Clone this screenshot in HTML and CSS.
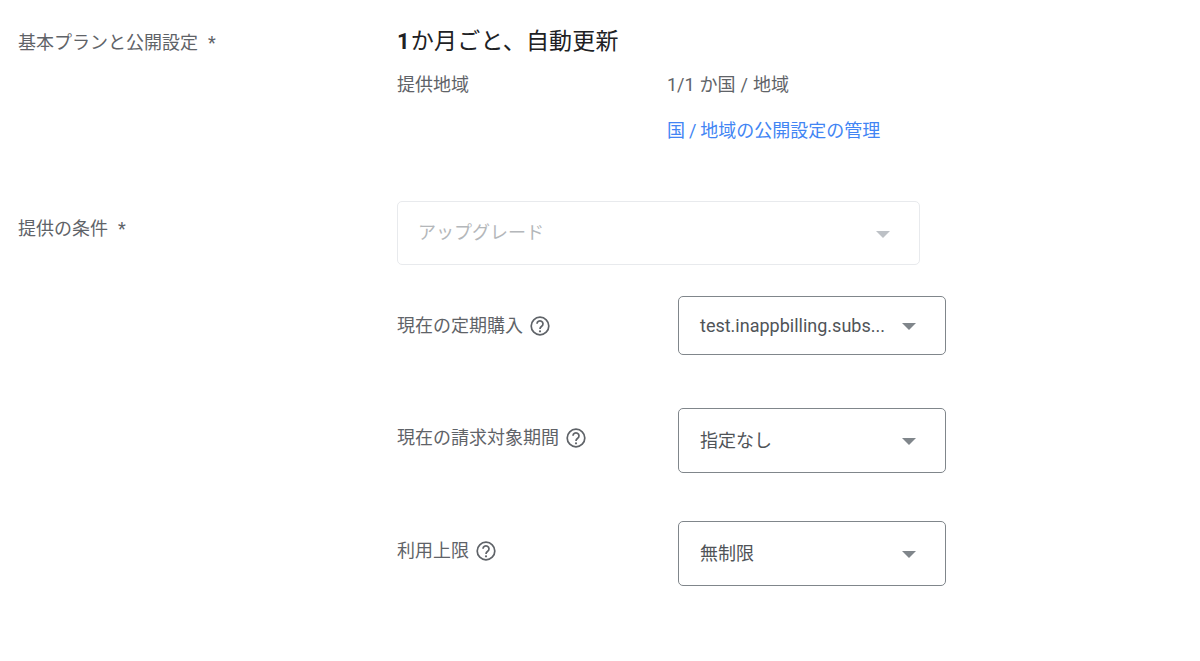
FILE: index.html
```html
<!DOCTYPE html>
<html lang="ja">
<head>
<meta charset="utf-8">
<title>基本プランと公開設定</title>
<link rel="stylesheet" href="styles.css">
</head>
<body>
<main class="form">
  <section class="section plan">
    <div class="section-label">基本プランと公開設定<span class="req">*</span></div>
    <div class="section-body">
      <h2 class="title"><b>1</b>か月ごと、自動更新</h2>
      <div class="region">
        <div class="region-label">提供地域</div>
        <div class="region-value">
          <div class="count">1/1 か国 / 地域</div>
          <a class="link" href="#">国 / 地域の公開設定の管理</a>
        </div>
      </div>
    </div>
  </section>
  <section class="section offer">
    <div class="section-label">提供の条件<span class="req">*</span></div>
    <div class="section-body">
      <div class="select disabled">
        <span class="value">アップグレード</span>
        <svg class="arrow" viewBox="0 0 14 7"><path d="M0 0h14L7 7z"/></svg>
      </div>
      <div class="field first">
        <div class="field-label">現在の定期購入
          <svg class="help" viewBox="0 0 20 20"><circle cx="10" cy="10" r="8.8"/><path d="M7 7.8a3 3 0 1 1 4.7 2.5c-1.1.8-1.7 1.300-1.700 2.700"/><circle class="dot" cx="10" cy="15.300" r="1.100"/></svg>
        </div>
        <div class="select small short"><span class="value">test.inappbilling.subs...</span>
          <svg class="arrow" viewBox="0 0 14 7"><path d="M0 0h14L7 7z"/></svg></div>
      </div>
      <div class="field second">
        <div class="field-label raised">現在の請求対象期間
          <svg class="help" viewBox="0 0 20 20"><circle cx="10" cy="10" r="8.8"/><path d="M7 7.8a3 3 0 1 1 4.7 2.5c-1.1.8-1.7 1.300-1.700 2.700"/><circle class="dot" cx="10" cy="15.300" r="1.100"/></svg>
        </div>
        <div class="select small"><span class="value">指定なし</span>
          <svg class="arrow" viewBox="0 0 14 7"><path d="M0 0h14L7 7z"/></svg></div>
      </div>
      <div class="field third">
        <div class="field-label raised">利用上限
          <svg class="help" viewBox="0 0 20 20"><circle cx="10" cy="10" r="8.8"/><path d="M7 7.8a3 3 0 1 1 4.7 2.5c-1.1.8-1.7 1.300-1.700 2.700"/><circle class="dot" cx="10" cy="15.300" r="1.100"/></svg>
        </div>
        <div class="select small"><span class="value">無制限</span>
          <svg class="arrow" viewBox="0 0 14 7"><path d="M0 0h14L7 7z"/></svg></div>
      </div>
    </div>
  </section>
</main>
</body>
</html>
```
FILE: styles.css
```css
* { box-sizing: border-box; }
html, body { margin: 0; padding: 0; background: #fff; }
body {
  width: 1200px;
  height: 661px;
  overflow: hidden;
  font-family: Roboto, "Noto Sans CJK JP", sans-serif;
  font-size: 18px;
  line-height: 24px;
  color: #5f6368;
}
.form { padding: 28px 0 0 18px; }
.section { display: flex; }
.section-label { width: 379px; flex: none; color: #5f6368; padding-top: 3px; }
.req { margin-left: 10px; }
.plan { height: 173px; }
.offer .section-label { padding-top: 16px; }
.title { margin: 0; font-size: 23px; line-height: 28px; font-weight: 400; color: #202124; letter-spacing: .2px; }
.title b { font-size: 22px; font-weight: 700; margin-right: 1px; }
.region { display: flex; margin-top: 17px; }
.region-label { width: 270px; flex: none; }
.count { word-spacing: .5px; }
.link { display: block; margin-top: 22px; color: #4285f4; text-decoration: none; word-spacing: -.5px; }
.select {
  display: flex;
  align-items: center;
  justify-content: space-between;
  border: 1px solid #80868b;
  border-radius: 5px;
  color: #505458;
  padding: 0 29px 0 21px;
}
.select.disabled {
  width: 523px;
  height: 64px;
  border-color: #e8eaed;
  color: #b4b7ba;
  padding-left: 20px;
}
.select.small { width: 268px; height: 65px; }
.select.short { height: 59px; }
.arrow { width: 14px; height: 7px; fill: #80868b; flex: none; margin-top: 2px; }
.disabled .arrow { fill: #bdc1c6; }
.field { display: flex; align-items: center; }
.field-label { width: 281px; flex: none; display: flex; align-items: center; gap: 7px; }
.field-label.raised { padding-bottom: 6px; }
.first { margin-top: 31px; }
.second { margin-top: 53px; }
.third { margin-top: 48px; }
.help { width: 20px; height: 20px; flex: none; fill: none; stroke: #5f6368; stroke-width: 1.700; }
.help .dot { fill: #5f6368; stroke: none; }
```
